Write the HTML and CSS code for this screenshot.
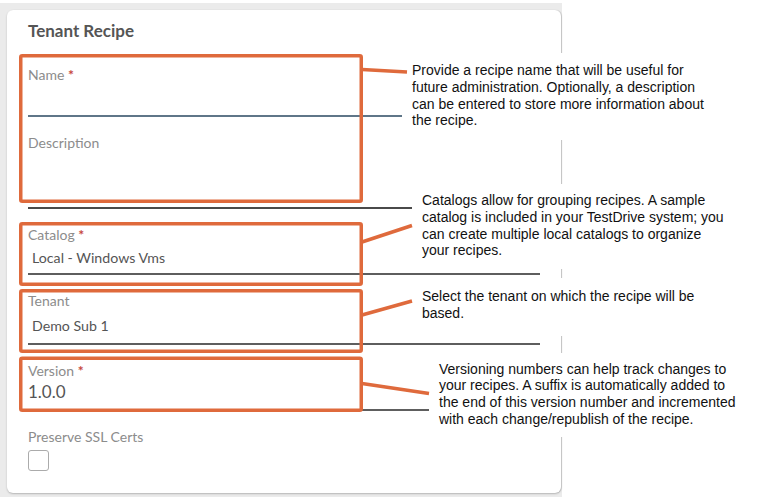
FILE: index.html
```html
<!DOCTYPE html>
<html>
<head>
<meta charset="utf-8">
<link rel="stylesheet" href="styles.css">
</head>
<body>
<div class="frame">
  <div class="card">
    <h1 class="title">Tenant Recipe</h1>
    <div class="field">
      <div class="label">Name <span class="req">*</span></div>
      <div class="input input-name"></div>
    </div>
    <div class="field">
      <div class="label">Description</div>
      <div class="input input-desc"></div>
    </div>
    <div class="field">
      <div class="label">Catalog <span class="req">*</span></div>
      <div class="input input-catalog"><span class="value">Local - Windows Vms</span></div>
    </div>
    <div class="field">
      <div class="label">Tenant</div>
      <div class="input input-tenant"><span class="value">Demo Sub 1</span></div>
    </div>
    <div class="field">
      <div class="label">Version <span class="req">*</span></div>
      <div class="input input-version"><span class="value-lg">1.0.0</span></div>
    </div>
    <div class="field">
      <div class="label">Preserve SSL Certs</div>
      <div class="checkbox"></div>
    </div>
  </div>
</div>

<div class="note note-a">Provide a recipe name that will be useful for<br>future administration. Optionally, a description<br>can be entered to store more information about<br>the recipe.</div>
<div class="note note-b">Catalogs allow for grouping recipes. A sample<br>catalog is included in your TestDrive system; you<br>can create multiple local catalogs to organize<br>your recipes.</div>
<div class="note note-c">Select the tenant on which the recipe will be<br>based.</div>
<div class="note note-d">Versioning numbers can help track changes to<br>your recipes. A suffix is automatically added to<br>the end of this version number and incremented<br>with each change/republish of the recipe.</div>

<svg class="overlay" width="770" height="501" viewBox="0 0 770 501">
  <g fill="none" stroke="#df6a3c" stroke-width="3.5" stroke-linejoin="round">
    <rect x="20.75" y="55.75" width="340.5" height="145.5" rx="1.5"/>
    <rect x="20.75" y="223.75" width="340.5" height="60.5" rx="1.5"/>
    <rect x="20.75" y="290.75" width="340.5" height="60.5" rx="1.5"/>
    <rect x="20.75" y="358.25" width="340.5" height="52" rx="1.5"/>
    <line x1="362" y1="69.5" x2="407" y2="72"/>
    <line x1="362" y1="242" x2="412" y2="225.5"/>
    <line x1="362" y1="315" x2="412" y2="301"/>
    <line x1="362" y1="383.5" x2="429" y2="393.5"/>
  </g>
</svg>
</body>
</html>
```
FILE: styles.css
```css
html, body {
  margin: 0;
  padding: 0;
  background: #ffffff;
}

body {
  position: relative;
  width: 770px;
  height: 501px;
  overflow: hidden;
  font-family: Lato, "Open Sans", sans-serif;
}

.frame {
  margin-top: 3px;
  width: 554px;
  padding: 7px 1px 4px 7px;
  background: #ebebeb;
}

.card {
  box-sizing: border-box;
  display: flex;
  flex-direction: column;
  height: 483px;
  background: #ffffff;
  border-radius: 6px;
  padding: 10.5px 21px 0 21px;
  box-shadow: 0 1px 2px rgba(0, 0, 0, 0.22), 1px 0 1px rgba(0, 0, 0, 0.12);
}

.title {
  margin: 0 0 8.5px 0;
  font-size: 17px;
  line-height: 20px;
  font-weight: 700;
  color: #555555;
}

.field {
  margin-top: 18px;
}

.label {
  font-size: 14px;
  line-height: 16px;
  color: #8c8c8c;
}

.req {
  color: #c6463d;
  font-weight: 700;
}

.input {
  box-sizing: border-box;
  border-bottom: 2px solid #5e5e5e;
}

.input-name {
  height: 33.5px;
  border-bottom-color: #5f7688;
}

.input-desc {
  height: 58px;
  border-bottom-color: #4a4a4a;
}

.input-catalog {
  height: 32px;
  padding: 5.5px 0 0 4px;
}

.input-tenant {
  height: 36px;
  padding: 7.8px 0 0 4px;
}

.input-version {
  height: 32.5px;
  padding-top: 2.5px;
}

.value {
  display: block;
  font-size: 14.2px;
  line-height: 20px;
  color: #555555;
}

.value-lg {
  display: block;
  font-size: 17px;
  line-height: 22px;
  color: #555555;
}

.checkbox {
  box-sizing: border-box;
  margin-top: 5px;
  width: 21px;
  height: 21px;
  border: 1.5px solid #ababab;
  border-radius: 3px;
  background: #ffffff;
}

.note {
  position: absolute;
  box-sizing: border-box;
  background: #ffffff;
  font-family: "Liberation Sans", Arial, sans-serif;
  font-size: 14px;
  line-height: 16.7px;
  color: #111111;
  white-space: nowrap;
  padding-left: 10px;
}

.note-a {
  left: 402px;
  top: 53px;
  width: 330px;
  height: 87px;
  padding-top: 9.3px;
}

.note-b {
  left: 412px;
  top: 184px;
  width: 340px;
  height: 85px;
  padding-top: 8.3px;
}

.note-c {
  left: 412px;
  top: 278px;
  width: 320px;
  height: 58px;
  padding-top: 10px;
}

.note-d {
  left: 429px;
  top: 353px;
  width: 330px;
  height: 84px;
  padding-top: 7.5px;
}

.overlay {
  position: absolute;
  left: 0;
  top: 0;
  pointer-events: none;
}
```
